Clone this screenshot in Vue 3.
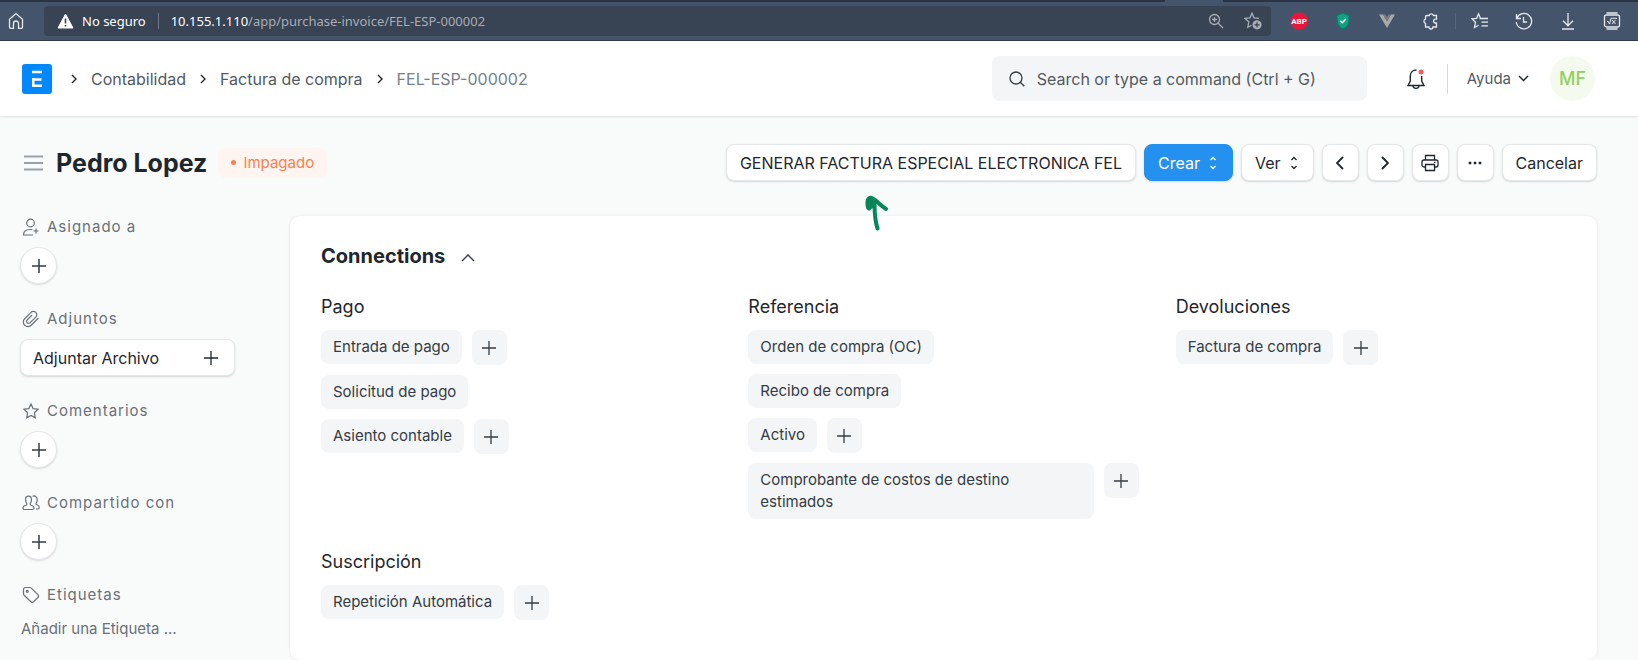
<script setup>
const crumbs = ['Contabilidad', 'Factura de compra']

const sections = [
  { id: 'assigned', label: 'Asignado a', control: 'circle' },
  { id: 'attach', label: 'Adjuntos', control: 'file' },
  { id: 'star', label: 'Comentarios', control: 'circle' },
  { id: 'people', label: 'Compartido con', control: 'circle' },
  { id: 'tag', label: 'Etiquetas', control: 'tag' },
]

const groups = [
  {
    title: 'Pago',
    items: [
      { name: 'Entrada de pago', add: true },
      { name: 'Solicitud de pago', add: false },
      { name: 'Asiento contable', add: true },
    ],
  },
  {
    title: 'Referencia',
    items: [
      { name: 'Orden de compra (OC)', add: false },
      { name: 'Recibo de compra', add: false },
      { name: 'Activo', add: true },
      { name: 'Comprobante de costos de destino estimados', add: true },
    ],
  },
  { title: 'Devoluciones', items: [{ name: 'Factura de compra', add: true }] },
  { title: 'Suscripción', items: [{ name: 'Repetición Automática', add: true }] },
]
</script>

<template>
  <div class="browser">
    <button class="tool home" aria-label="Inicio">
      <svg width="16" height="18" viewBox="0 0 16 18"><path d="M1.5 7.3 8 1.6l6.500 5.700v7.700a1.300 1.300 0 0 1-1.300 1.300H10.500v-4.800a2.500 2.500 0 0 0-5 0v4.800H2.800A1.300 1.300 0 0 1 1.500 15z" /></svg>
    </button>
    <div class="address">
      <svg class="warn" width="17" height="16" viewBox="0 0 17 16"><path d="M8.500 1 16 15H1z" fill="#fff" stroke="#fff" stroke-linejoin="round" /><path d="M8.500 5.500v5M8.500 12v1.600" stroke="#384354" stroke-width="1.600" /></svg>
      <span class="insecure">No seguro</span>
      <span class="url"><b>10.155.1.110</b>/app/purchase-invoice/FEL-ESP-000002</span>
      <span class="address-tools">
        <button class="tool dim" aria-label="Zoom">
          <svg width="16" height="16" viewBox="0 0 16 16"><circle cx="6.500" cy="6.500" r="5" /><path d="M10.200 10.200 15 15M4 6.500h5M6.500 4v5" /></svg>
        </button>
        <button class="tool dim" aria-label="Agregar a favoritos">
          <svg width="18" height="18" viewBox="0 0 18 18"><path d="M15 6.300 10 5.800 8 1.200 6 5.800l-5 .6 3.800 3.400-1 5.400 3.600-2" /><circle cx="13" cy="12.800" r="4.600" fill="#a9adb4" stroke="none" /><path d="M13 10.300v5M10.500 12.800h5" stroke="#384354" /></svg>
        </button>
      </span>
    </div>
    <div class="extensions">
      <button class="tool" aria-label="ABP">
        <svg width="18" height="18" viewBox="0 0 18 18"><path d="M5.300.8h7.400l4.500 4.500v7.400l-4.500 4.500H5.300L.8 12.700V5.300z" fill="#e9163c" stroke="none" /><text x="9" y="12" text-anchor="middle" class="abp">ABP</text></svg>
      </button>
      <button class="tool" aria-label="Escudo">
        <svg width="18" height="18" viewBox="0 0 18 18"><path d="M9 1 15 3.500V9c0 4-2.500 6.500-6 8-3.500-1.500-6-4-6-8V3.500z" fill="#12a182" stroke="#0b7b66" /><path d="m6.300 8.700 2 2 3.600-3.700" stroke="#fff" stroke-width="1.500" /></svg>
      </button>
      <button class="tool" aria-label="Vue">
        <svg width="18" height="18" viewBox="0 0 18 18"><path d="M1 2.500h4L9 9.300l4-6.800h4L9 16z" fill="#aaa" stroke="none" /><path d="M5 2.500h2.500L9 5l1.500-2.500H13L9 9.500z" fill="#777b80" stroke="none" /></svg>
      </button>
      <button class="tool" aria-label="Extensiones">
        <svg width="18" height="18" viewBox="0 0 18 18"><path d="M5 3.500h2.200a2.200 2.200 0 0 1 4.200 0h3.100v3.700h-1a1.900 1.900 0 0 0 0 3.800h1v4H11a2 2 0 0 1-4 0H3.500v-3.700a2.200 2.200 0 0 1 0-4.200V5A1.500 1.500 0 0 1 5 3.500z" /></svg>
      </button>
      <i class="bar-line"></i>
      <button class="tool" aria-label="Favoritos">
        <svg width="18" height="18" viewBox="0 0 18 18"><path d="m9.500 6.400-1.900-4.600-2 4.500-4.700.5 3.600 3.400-1 5.300 4-2.300M8.500 6.500H17M10.500 10.200H17M10.500 13.800H17" /></svg>
      </button>
      <button class="tool" aria-label="Historial">
        <svg width="18" height="18" viewBox="0 0 18 18"><path d="M1.500 2v4.500H6M1.800 6.300A7.700 7.700 0 1 1 1.300 10M8.500 5v5H12" /></svg>
      </button>
      <button class="tool" aria-label="Descargas">
        <svg width="18" height="18" viewBox="0 0 18 18"><path d="M9 1v12.500M4 8.800l5 5 5-5M3 17h12" /></svg>
      </button>
      <button class="tool" aria-label="Matemáticas">
        <svg width="18" height="18" viewBox="0 0 18 18"><rect x="1.500" y="3" width="15" height="12" rx="2" /><path d="M3.500 1h11M3.500 17h11" /><path d="M4 9.500h1.200L6.500 12 8 6.300h6M9 8l3.500 4M12.500 8 9 12" stroke-width="1" /></svg>
      </button>
    </div>
  </div>

  <header class="navbar">
    <nav class="crumbs">
      <a href="#" class="logo" aria-label="ERPNext">
        <svg width="30" height="30" viewBox="0 0 30 30"><rect width="30" height="30" rx="3" fill="#0089ff" stroke="none" /><path d="M10 8h10M11.300 14v9M10 15.500h9.500M10 21.800h10" stroke="#fff" stroke-width="2.500" fill="none" /></svg>
      </a>
      <template v-for="c in crumbs" :key="c">
        <svg class="sep" width="6" height="10" viewBox="0 0 6 10"><path d="m1 1 4 4-4 4" /></svg>
        <a href="#">{{ c }}</a>
      </template>
      <svg class="sep" width="6" height="10" viewBox="0 0 6 10"><path d="m1 1 4 4-4 4" /></svg>
      <a href="#" class="current">FEL-ESP-000002</a>
    </nav>
    <label class="search">
      <svg width="16" height="16" viewBox="0 0 16 16"><circle cx="7" cy="7" r="6" /><path d="m11.300 11.300 4 4" /></svg>
      <input type="text" aria-label="Buscar" placeholder="Search or type a command (Ctrl + G)" />
    </label>
    <button class="bell" aria-label="Notificaciones">
      <svg width="20" height="22" viewBox="0 0 20 22"><path d="M10.500 2C6.700 2 4.300 4.500 4.300 8v5L2 17.500h16L15.700 13V8M7 18c.4 3.200 5.600 3.200 6 0" /><circle cx="15" cy="4" r="2.500" fill="#ff5858" stroke="none" /></svg>
    </button>
    <i class="nav-line"></i>
    <button class="help">Ayuda <svg width="11" height="7" viewBox="0 0 11 7"><path d="m1 1 4.500 4.500L10 1" /></svg></button>
    <button class="avatar">MF</button>
  </header>

  <div class="page-head">
    <button class="menu" aria-label="Menú">
      <svg width="19" height="16" viewBox="0 0 19 16"><path d="M0 1.500h19M0 8h19M0 14.500h19" /></svg>
    </button>
    <h1>Pedro Lopez</h1>
    <span class="badge"><i></i>Impagado</span>
    <div class="actions">
      <span class="generate">
        <button class="btn">GENERAR FACTURA ESPECIAL ELECTRONICA FEL</button>
        <svg class="arrow" width="26" height="38" viewBox="0 0 26 38"><path d="M13.500 34.500C11 27 10.500 20 10.500 9M10.500 10 5.500 14M4 13.500C2.800 8 3.500 4.500 6.500 3.800c4 0 9 7 15.500 11.200M5 14.500C7 9 7 6 6.500 4M10 11 7 5" /></svg>
      </span>
      <button class="btn drop primary">Crear <svg width="8" height="14" viewBox="0 0 8 14"><path d="m1.500 4 2.500-2.500L6.500 4M1.500 10 4 12.500 6.500 10" /></svg></button>
      <button class="btn drop">Ver <svg width="8" height="14" viewBox="0 0 8 14"><path d="m1.500 4 2.500-2.500L6.500 4M1.500 10 4 12.500 6.500 10" /></svg></button>
      <button class="btn square" aria-label="Anterior"><svg class="strong" width="8" height="14" viewBox="0 0 8 14"><path d="M7 1 1 7l6 6" /></svg></button>
      <button class="btn square" aria-label="Siguiente"><svg class="strong" width="8" height="14" viewBox="0 0 8 14"><path d="m1 1 6 6-6 6" /></svg></button>
      <button class="btn square" aria-label="Imprimir"><svg width="18" height="18" viewBox="0 0 18 18"><path d="M4.500 6V1.500h9V6M4.500 13H3a2 2 0 0 1-2-2V8a2 2 0 0 1 2-2h12a2 2 0 0 1 2 2v3a2 2 0 0 1-2 2h-1.500M4.500 10.500h9v6h-9zM13 8.300h1.500" /></svg></button>
      <button class="btn square" aria-label="Más"><svg width="14" height="4" viewBox="0 0 14 4"><path d="M.7.700h2.600v2.600H.7zM5.700.700h2.600v2.600H5.700zM10.700.700h2.600v2.600h-2.600z" fill="#1f272e" stroke="none" /></svg></button>
      <button class="btn">Cancelar</button>
    </div>
  </div>

  <div class="layout">
    <aside>
      <section v-for="s in sections" :key="s.id">
        <h2>
          <svg v-if="s.id === 'assigned'" width="18" height="18" viewBox="0 0 18 18"><circle cx="8.500" cy="5" r="3.800" /><path d="M11 17H1.500c0-4 2.500-5.500 6.500-5.500 1 0 1.800 0 2.500.3M14 10.500v5M11.500 13h5" /></svg>
          <svg v-else-if="s.id === 'attach'" width="18" height="18" viewBox="0 0 18 18"><path d="m16.500 8-7 7a4.500 4.500 0 0 1-6.800.2 4.500 4.500 0 0 1 0-6.500l6.300-6.300a3.300 3.300 0 0 1 4.800 0 3.300 3.300 0 0 1 0 4.700L8 12.800a2 2 0 0 1-2.900 0 2 2 0 0 1 0-2.800L10 5" /></svg>
          <svg v-else-if="s.id === 'star'" width="18" height="18" viewBox="0 0 18 18"><path d="m9 2 2.100 4.600 4.900.6-3.600 3.500.9 5.100L9 13.400l-4.300 2.400.9-5.100L2 7.200l4.900-.6z" /></svg>
          <svg v-else-if="s.id === 'people'" width="18" height="18" viewBox="0 0 18 18"><path d="M3.500 5.500c0-4.500 6-4.500 6 0 0 2-.7 3.200-1.200 3.900-.4.900 0 1.500.8 1.800 1.600.5 2.900 1 2.900 2.500 0 1-.5 1.800-1.500 1.800h-8c-1 0-1.500-.8-1.500-1.800 0-1.500 1.300-2 2.900-2.500.8-.3 1.200-.9.800-1.800-.5-.7-1.200-1.900-1.200-3.900zM10.500 2.300c2.500-1 4.700.5 4.700 3.400 0 1.800-.5 2.800-1 3.500s-.1 1.300.6 1.500c1.500.5 2.500 1 2.500 2.500 0 1-.7 1.800-1.800 1.800H14" /></svg>
          <svg v-else width="18" height="18" viewBox="0 0 18 18"><path d="M1.500 3.500a2 2 0 0 1 2-2h4.300c.6 0 1 .2 1.500.6l6.600 6.600a2 2 0 0 1 0 2.800l-4.200 4.200a2 2 0 0 1-2.800 0L2.100 9.300c-.4-.4-.6-.9-.6-1.500z" /><circle cx="5.300" cy="5.300" r="1" /></svg>
          {{ s.label }}
        </h2>
        <button v-if="s.control === 'circle'" class="circle" :aria-label="'Añadir: ' + s.label"><svg width="14" height="14" viewBox="0 0 14 14"><path d="M7 0v14M0 7h14" /></svg></button>
        <button v-else-if="s.control === 'file'" class="btn file">Adjuntar Archivo <svg width="14" height="14" viewBox="0 0 14 14"><path d="M7 0v14M0 7h14" /></svg></button>
        <input v-else class="tag-input" type="text" aria-label="Añadir una etiqueta" placeholder="Añadir una Etiqueta ..." />
      </section>
    </aside>

    <main class="card">
      <h2 class="card-title">Connections <svg width="14" height="8" viewBox="0 0 14 8"><path d="m1 7 6-6 6 6" /></svg></h2>
      <div class="groups">
        <section v-for="g in groups" :key="g.title">
          <h3>{{ g.title }}</h3>
          <div v-for="i in g.items" :key="i.name" class="row">
            <a href="#" class="chip">{{ i.name }}</a>
            <button v-if="i.add" class="add" :aria-label="'Crear ' + i.name"><svg width="14" height="14" viewBox="0 0 14 14"><path d="M7 0v14M0 7h14" /></svg></button>
          </div>
        </section>
      </div>
    </main>
  </div>
</template>

<style>
body {
  background: #f9fafa;
  font-family: Inter, sans-serif;
  color: #1f272e;
}
</style>

<style scoped>
* { box-sizing: border-box; }
button, input { font: inherit; color: inherit; border: 0; background: none; padding: 0; }
a { color: inherit; text-decoration: none; }
h1, h2, h3 { margin: 0; }
svg { fill: none; stroke: #333c44; flex: none; display: block; }
.browser {
  position: relative;
  display: flex;
  align-items: center;
  height: 41px;
  background: #44546a;
  border-top: 2px solid #2b3442;
  border-bottom: 1px solid #2f3b4c;
  font-family: "Noto Sans", sans-serif;
  font-size: 13px;
  color: #fff;
}
/* lower edge of the active tab, joined to the toolbar */
.browser::before {
  content: "";
  position: absolute;
  top: -2px;
  right: 415px;
  width: 58px;
  height: 2px;
  background: #44546a;
}
.tool { display: grid; place-items: center; width: 44px; height: 30px; }
.tool svg { stroke: #e6e9ed; stroke-width: 1.3; }
.tool.dim { width: 37px; }
.tool.dim svg { stroke: #a9adb4; }
.home { width: 32px; margin-right: 12px; }
.abp { fill: #fff; stroke: none; font: bold 8px Roboto, sans-serif; }
.address {
  display: flex;
  flex: 1;
  align-items: center;
  height: 30px;
  padding-left: 13px;
  background: #384354;
  border-radius: 4px;
}
.address .warn { margin-right: 8px; stroke-width: 1; }
.insecure { padding-right: 12px; border-right: 1px solid #6f7884; line-height: 16px; }
.url { padding-left: 12px; color: #a9adb4; }
.url b { font-weight: 400; color: #fff; }
.address-tools { display: flex; margin-left: auto; }
.extensions { display: flex; align-items: center; padding: 0 4px 0 6px; }
.bar-line { width: 1px; height: 16px; margin: 0 2px; background: #5d6672; }

.navbar {
  display: flex;
  align-items: center;
  height: 75px;
  padding: 0 43px 0 22px;
  background: #fff;
  box-shadow: 0 1px 2px rgba(25, 39, 52, 0.12);
  font-size: 16px;
  color: #4c5a67;
}
.crumbs { display: flex; align-items: center; flex: 1; gap: 14px; color: #505a62; }
.logo { margin-right: 5px; }
.sep { stroke: #1f272e; stroke-width: 1.4; }
.crumbs .current { color: #74808b; }
.search {
  display: flex;
  align-items: center;
  gap: 12px;
  width: 375px;
  height: 45px;
  padding: 0 17px;
  background: #f4f5f6;
  border-radius: 8px;
}
.search svg { stroke-width: 1.3; }
.search input { flex: 1; min-width: 0; outline: 0; }
.search input::placeholder { color: #505a62; opacity: 1; }
.bell { margin: 0 21px 0 39px; }
.bell svg { stroke: #1f272e; stroke-width: 1.4; }
.nav-line { width: 1px; height: 30px; background: #d5d9dd; }
.help { display: flex; align-items: center; gap: 7px; margin: 0 21px 0 19px; font-size: 15px; color: #505a62; }
.help svg { stroke: #1f272e; stroke-width: 1.4; }
.avatar { width: 45px; height: 45px; border-radius: 50%; background: #f5faee; color: #93d15c; font-size: 18px; font-weight: 500; }

.page-head { display: flex; align-items: center; padding: 28px 41px 35px 24px; }
.menu svg { stroke: #98a1a9; stroke-width: 1.8; }
h1 { margin: 0 11px 0 13px; font-size: 25px; line-height: 30px; font-weight: 700; }
.badge {
  display: flex;
  align-items: center;
  height: 30px;
  padding: 0 13px;
  border-radius: 8px;
  background: #fff5f0;
  color: #f8814f;
  font-size: 15px;
}
.badge i { width: 5px; height: 5px; margin-right: 7px; border-radius: 50%; background: #f8814f; }
.actions { display: flex; gap: 8px; margin-left: auto; }
.btn {
  display: flex;
  align-items: center;
  justify-content: center;
  gap: 9px;
  height: 37px;
  padding: 0 13px;
  border: 1px solid #e4e6e8;
  border-radius: 8px;
  background: #fff;
  box-shadow: 0 1px 2px rgba(25, 39, 52, 0.16);
  font-size: 16px;
  white-space: nowrap;
}
.btn svg { stroke: #1f272e; stroke-width: 1.3; }
.btn .strong { stroke-width: 1.8; }
.drop { padding-right: 15px; }
.square { width: 37px; padding: 0; }
.primary { border-color: #2490ef; background: #2490ef; color: #fff; }
.primary svg { stroke: #fff; }
.generate { position: relative; }
.arrow { position: absolute; left: 138px; top: 50px; stroke: #06875a; stroke-width: 4; stroke-linecap: round; stroke-linejoin: round; }

.layout {
  display: grid;
  grid-template-columns: 215px minmax(0, 1fr);
  gap: 55px;
  align-items: start;
  padding: 0 41px 0 20px;
}
aside { padding-top: 1px; }
aside section { margin-bottom: 25px; }
aside section:last-child { margin-bottom: 0; }
aside h2 {
  display: flex;
  align-items: center;
  gap: 7px;
  margin-bottom: 10px;
  padding-left: 2px;
  font-size: 15px;
  line-height: 20px;
  font-weight: 400;
  letter-spacing: 1px;
  color: #687178;
}
aside h2 svg { stroke: #687178; stroke-width: 1.2; }
.circle {
  display: grid;
  place-items: center;
  width: 37px;
  height: 37px;
  border: 1px solid #e4e6e8;
  border-radius: 50%;
  background: #fff;
  box-shadow: 0 1px 2px rgba(25, 39, 52, 0.16);
}
.circle svg { stroke-width: 1.5; }
.file { width: 100%; justify-content: space-between; padding: 0 16px 0 12px; }
.tag-input { display: block; width: 100%; height: 26px; padding-left: 1px; outline: 0; font-size: 15px; }
.tag-input::placeholder { color: #687178; opacity: 1; }

.card {
  padding: 25px 31px 40px;
  border-radius: 10px;
  background: #fff;
  box-shadow: 0 0 3px rgba(25, 39, 52, 0.1);
}
.card-title {
  display: flex;
  align-items: center;
  gap: 16px;
  margin-bottom: 24px;
  font-size: 20px;
  line-height: 30px;
  font-weight: 700;
}
.card-title svg { margin-top: 4px; stroke-width: 1.4; }
.groups { display: grid; grid-template-columns: repeat(3, minmax(0, 1fr)); gap: 31px 37px; }
h3 { margin-bottom: 11px; font-size: 18px; line-height: 24px; font-weight: 400; }
.row { display: flex; align-items: flex-start; gap: 10px; margin-bottom: 10px; }
.row:last-child { margin-bottom: 0; }
.chip {
  padding: 6px 12px;
  border-radius: 8px;
  background: #f4f5f6;
  font-size: 15px;
  line-height: 22px;
  color: #333c44;
}
.add { display: grid; place-items: center; flex: none; width: 35px; height: 35px; border-radius: 8px; background: #f4f5f6; }
.add svg { stroke-width: 1.3; }
</style>
